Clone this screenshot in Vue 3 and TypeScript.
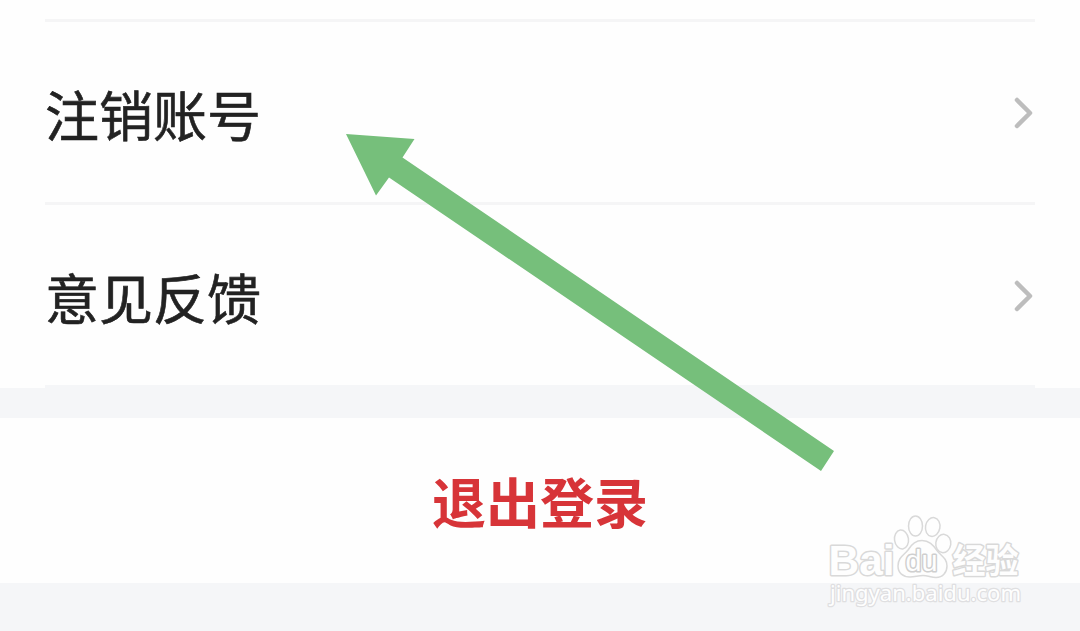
<script setup lang="ts">
interface SettingItem {
  id: string
  label: string
}

const items: SettingItem[] = [
  { id: 'cancel', label: '注销账号' },
  { id: 'feedback', label: '意见反馈' },
]
</script>

<template>
  <main class="page">
    <section class="list">
      <div v-for="item in items" :key="item.id" class="row">
        <span class="label">{{ item.label }}</span>
        <svg class="chevron" width="20" height="32" viewBox="0 0 20 32">
          <path d="M3 3L16 16L3 29" />
        </svg>
      </div>
    </section>
    <button class="logout" type="button">退出登录</button>

    <svg class="arrow" width="1080" height="631" viewBox="0 0 1080 631">
      <path d="M346 134L414.500 139L402.500 157.500L834 451L821 471L389 177.500L376 195.500Z" />
    </svg>

    <svg class="watermark" width="240" height="131" viewBox="0 0 240 131">
      <g class="mark">
        <ellipse cx="91.500" cy="39.500" rx="7" ry="9.500" transform="rotate(-8 91.500 39.500)" />
        <ellipse cx="105.500" cy="26" rx="7" ry="10" />
        <ellipse cx="122.700" cy="27" rx="7.200" ry="9.500" transform="rotate(10 122.700 27)" />
        <ellipse cx="133.300" cy="43.500" rx="7.500" ry="9.200" transform="rotate(8 133.300 43.500)" />
        <path d="M112 40.500C105 40.500 101 45 98 50C94.500 55 88 57 88 66C88 73 93 77 100 77C105 77 108 75.500 113 75.500C118 75.500 121 77.500 126 77.500C133 77.500 137 72 137 66C137 58 131 56 127 50.500C123 45 119 40.500 112 40.500Z" />
      </g>
      <text class="word" x="18.500" y="75" textLength="66" lengthAdjust="spacingAndGlyphs">Bai</text>
      <text class="du" x="95.500" y="70.500" textLength="32" lengthAdjust="spacingAndGlyphs">du</text>
      <text class="cn" x="142.500" y="72.500" textLength="66" lengthAdjust="spacingAndGlyphs">经验</text>
      <text class="url" x="20" y="101" textLength="191" lengthAdjust="spacingAndGlyphs">jingyan.baidu.com</text>
    </svg>
  </main>
</template>

<style>
body {
  margin: 0;
}
</style>

<style scoped>
.page {
  position: relative;
  width: 1080px;
  height: 631px;
  overflow: hidden;
  background: #f5f6f8;
  font-family: "Noto Sans CJK SC", sans-serif;
}

.list {
  box-sizing: border-box;
  height: 388px;
  padding: 19px 45px 0;
  background: #fefefe;
}

.row {
  box-sizing: border-box;
  height: 183px;
  padding: 0 1px 0 0;
  display: flex;
  align-items: center;
  justify-content: space-between;
  border-top: 3px solid #f5f5f6;
}

.row:last-child {
  height: 186px;
  border-bottom: 3px solid #f5f6f8;
}

.label {
  font-size: 54px;
  line-height: 80px;
  color: #222;
  -webkit-text-stroke: 0.600px #222;
  padding-top: 3px;
}

.chevron {
  margin-top: 2px;
  fill: none;
  stroke: #bdbdbd;
  stroke-width: 4.500;
  stroke-linecap: round;
  stroke-linejoin: round;
}

.logout {
  display: flex;
  align-items: center;
  justify-content: center;
  width: 100%;
  height: 165px;
  margin: 30px 0 0;
  padding: 0;
  border: 0;
  background: #fefefe;
  color: #d73438;
  font: 700 54px/80px "Noto Sans CJK SC", sans-serif;
}

.arrow {
  position: absolute;
  left: 0;
  top: 0;
  fill: #76bf7b;
}

.watermark {
  position: absolute;
  left: 810px;
  top: 500px;
  fill: #fefefe;
  stroke: #d9d9d9;
  stroke-width: 1.500;
  stroke-linejoin: round;
}

.watermark text {
  paint-order: stroke;
  stroke-width: 3;
}

.watermark .word {
  font: 700 43px "Liberation Sans", sans-serif;
}

.watermark .du {
  font: 400 29px "Liberation Sans", sans-serif;
  stroke: #cfcfcf;
}

.watermark .cn {
  font: 700 34px "Noto Sans CJK SC", sans-serif;
}

.watermark .url {
  font: 400 22px "Noto Sans", sans-serif;
  stroke: #dfdfe1;
  stroke-width: 2.500;
}
</style>
